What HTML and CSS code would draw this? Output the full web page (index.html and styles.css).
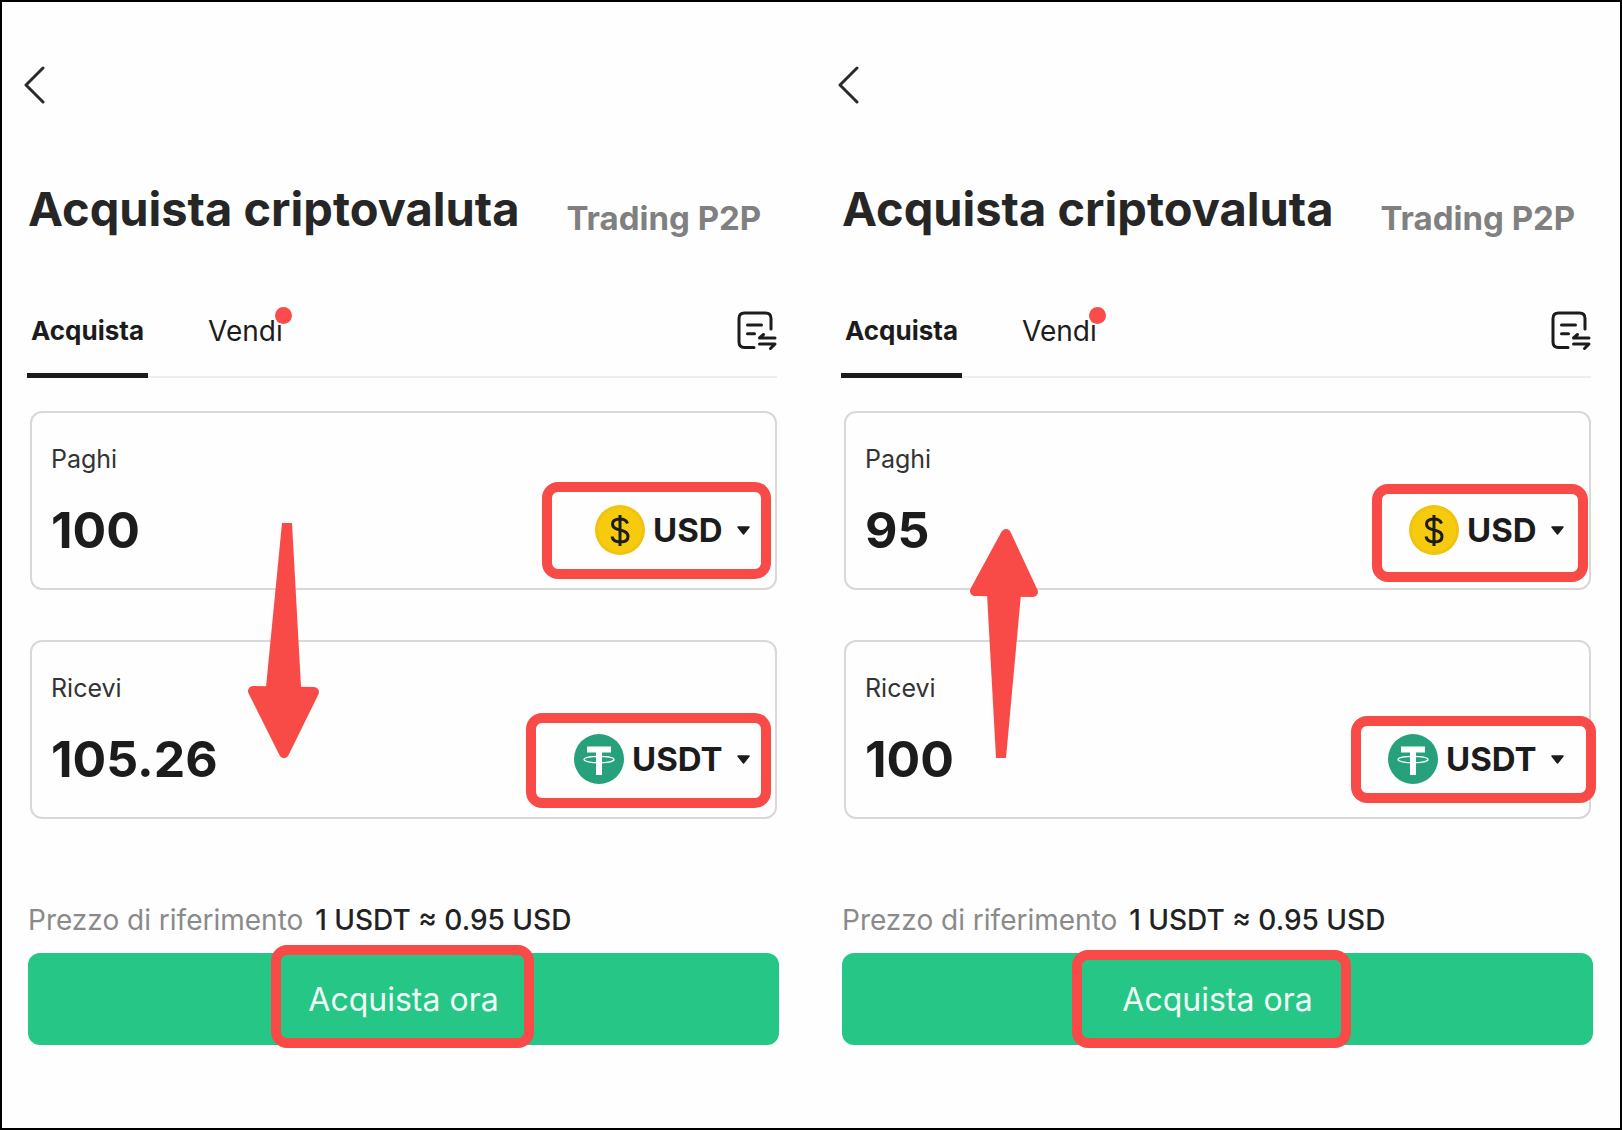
FILE: index.html
```html
<!DOCTYPE html>
<html lang="it">

<head>
  <meta charset="UTF-8">
  <meta name="viewport" content="width=device-width, initial-scale=1.0">
  <title>Acquista criptovaluta</title>
  <link rel="stylesheet" href="styles.css">
</head>

<body>
  <!-- shared icons -->
  <svg class="sprite" aria-hidden="true">
    <symbol id="back" viewBox="0 0 22 38">
      <path d="M20 2L3 19L20 36" fill="none" stroke="#2a2a2a" stroke-width="3" stroke-linecap="round" stroke-linejoin="round" />
    </symbol>
    <symbol id="orders" viewBox="0 0 40 40">
      <g fill="none" stroke="#1c1c1c" stroke-width="3" stroke-linecap="round" stroke-linejoin="round">
        <path d="M34 18V7.500Q34 2 28.500 2H7.500Q2 2 2 7.500V31Q2 36.500 7.500 36.500H17" />
        <path d="M10.500 14H24.500M10.500 22.800H17.500" />
        <path d="M38 27H22.500L26.500 23.500M22.500 33H38L33.500 37.500" />
      </g>
    </symbol>
    <symbol id="usd" viewBox="0 0 50 50">
      <circle cx="25" cy="25" r="25" fill="#f0c310" />
      <circle cx="25" cy="25" r="22" fill="#f6cb0e" />
      <path d="M32.500 18.500Q31 14 25 14Q17.500 14 17.500 19Q17.500 23.500 25 25Q33 26.500 33 31.500Q33 37 25.500 37Q18 37 17 31.500M25 10V41" fill="none" stroke="#1c1c1c" stroke-width="3" />
    </symbol>
    <symbol id="usdt" viewBox="0 0 50 50">
      <circle cx="25" cy="25" r="25" fill="#26a17b" />
      <path d="M13 12.500H37V18.500H28V41H22V18.500H13Z" fill="#fff" />
      <ellipse cx="25" cy="25.500" rx="15" ry="3.200" fill="none" stroke="#fff" stroke-width="1.300" />
    </symbol>
    <symbol id="caret" viewBox="0 0 13 9">
      <path d="M1 1H12L6.500 8Z" fill="#1c1c1c" stroke="#1c1c1c" stroke-width="1.500" stroke-linejoin="round" />
    </symbol>
  </svg>

  <main class="frame">

    <section class="screen">
      <button class="back" type="button" aria-label="Indietro"><svg><use href="#back" /></svg></button>
      <header class="head">
        <h1>Acquista criptovaluta</h1>
        <a href="#">Trading P2P</a>
      </header>
      <nav class="tabs">
        <button class="tab active" type="button">Acquista</button>
        <button class="tab" type="button"><span class="dot">Vendi</span></button>
        <button class="orders" type="button" aria-label="Ordini"><svg><use href="#orders" /></svg></button>
      </nav>
      <div class="cards">
        <div class="card">
          <label for="pay1">Paghi</label>
          <div class="row">
            <input id="pay1" type="text" value="100">
            <div class="currency">
              <svg class="coin"><use href="#usd" /></svg>
              <select aria-label="Valuta"><option>USD</option></select>
              <svg class="caret"><use href="#caret" /></svg>
              <span class="mark mark-pay1"></span>
            </div>
          </div>
        </div>
        <div class="card">
          <label for="get1">Ricevi</label>
          <div class="row">
            <input id="get1" type="text" value="105.26">
            <div class="currency">
              <svg class="coin"><use href="#usdt" /></svg>
              <select aria-label="Criptovaluta"><option>USDT</option></select>
              <svg class="caret"><use href="#caret" /></svg>
              <span class="mark mark-get1"></span>
            </div>
          </div>
        </div>
        <svg class="arrow down" viewBox="0 0 72 236">
          <path d="M34 0H44L53 164H18Z" />
          <path class="tip" d="M5 168L66 169L36 230Z" />
        </svg>
      </div>
      <p class="price">Prezzo di riferimento <b>1 USDT ≈ 0.95 USD</b></p>
      <div class="buy">
        <button type="button">Acquista ora</button>
        <span class="mark mark-buy1"></span>
      </div>
    </section>

    <section class="screen">
      <button class="back" type="button" aria-label="Indietro"><svg><use href="#back" /></svg></button>
      <header class="head">
        <h1>Acquista criptovaluta</h1>
        <a href="#">Trading P2P</a>
      </header>
      <nav class="tabs">
        <button class="tab active" type="button">Acquista</button>
        <button class="tab" type="button"><span class="dot">Vendi</span></button>
        <button class="orders" type="button" aria-label="Ordini"><svg><use href="#orders" /></svg></button>
      </nav>
      <div class="cards">
        <div class="card">
          <label for="pay2">Paghi</label>
          <div class="row">
            <input id="pay2" type="text" value="95">
            <div class="currency">
              <svg class="coin"><use href="#usd" /></svg>
              <select aria-label="Valuta"><option>USD</option></select>
              <svg class="caret"><use href="#caret" /></svg>
              <span class="mark mark-pay2"></span>
            </div>
          </div>
        </div>
        <div class="card">
          <label for="get2">Ricevi</label>
          <div class="row">
            <input id="get2" type="text" value="100">
            <div class="currency">
              <svg class="coin"><use href="#usdt" /></svg>
              <select aria-label="Criptovaluta"><option>USDT</option></select>
              <svg class="caret"><use href="#caret" /></svg>
              <span class="mark mark-get2"></span>
            </div>
          </div>
        </div>
        <svg class="arrow up" viewBox="0 0 70 230">
          <path d="M18 66H52L37 230H27Z" />
          <path class="tip" d="M6 63L64 64L37 6Z" />
        </svg>
      </div>
      <p class="price">Prezzo di riferimento <b>1 USDT ≈ 0.95 USD</b></p>
      <div class="buy">
        <button type="button">Acquista ora</button>
        <span class="mark mark-buy2"></span>
      </div>
    </section>

  </main>
</body>

</html>
```

FILE: styles.css
```css
* {
  box-sizing: border-box;
}

body {
  margin: 0;
  font-family: Inter, "Liberation Sans", sans-serif;
  color: #1c1c1c;
  background: #fefefe;
}

button,
input,
select {
  margin: 0;
  padding: 0;
  border: none;
  background: none;
  font-family: inherit;
  color: inherit;
}

svg {
  display: block;
}

.sprite {
  position: absolute;
  width: 0;
  height: 0;
}

.frame {
  display: grid;
  grid-template-columns: 1fr 1fr;
  gap: 10px;
  min-height: 100vh;
  border: 2px solid #000;
}

.screen {
  padding: 64px 27px 40px 26px;
  min-width: 0;
}

.back {
  display: block;
  margin-left: -5px;
}

.back svg {
  width: 22px;
  height: 38px;
}

.head {
  display: flex;
  align-items: flex-end;
  gap: 47px;
  margin-top: 76px;
  white-space: nowrap;
}

h1 {
  margin: 0;
  font-size: 47px;
  line-height: 58px;
  font-weight: 700;
  color: #262626;
}

.head a {
  font-size: 33px;
  line-height: 40px;
  font-weight: 700;
  color: #808080;
  text-decoration: none;
}

.tabs {
  display: flex;
  align-items: flex-start;
  margin: 73px 2px 0 -1px;
  box-shadow: inset 0 -2px #eee;
}

.tab {
  padding: 0 4px 22px;
  border-bottom: 5px solid transparent;
  font-size: 28px;
  line-height: 40px;
}

.tab + .tab {
  margin-left: 56px;
}

.active {
  border-color: #1c1c1c;
  font-size: 26px;
  font-weight: 700;
}

.dot {
  position: relative;
}

.dot::after {
  content: "";
  position: absolute;
  top: -7px;
  right: -9px;
  width: 17px;
  height: 17px;
  border-radius: 50%;
  background: #fb4b4b;
}

.orders {
  margin-left: auto;
}

.orders svg {
  width: 40px;
  height: 40px;
}

.cards {
  position: relative;
  display: grid;
  gap: 50px;
  margin: 33px 2px 0 2px;
}

.card {
  padding: 31px 25px 29px 19px;
  border: 2px solid #d8d8d8;
  border-radius: 12px;
}

.card label {
  display: block;
  font-size: 25px;
  line-height: 30px;
  color: #333;
}

.row {
  display: flex;
  justify-content: space-between;
  align-items: center;
  margin-top: 27px;
}

.row input {
  width: 50%;
  height: 58px;
  font-size: 50px;
  font-weight: 700;
}

.currency {
  position: relative;
  display: flex;
  align-items: center;
}

.coin {
  width: 50px;
  height: 50px;
}

.currency select {
  appearance: none;
  margin: 0 14px 0 8px;
  font-size: 33px;
  line-height: 40px;
  font-weight: 700;
}

.caret {
  width: 13px;
  height: 9px;
}

.price {
  margin: 84px 0 16px;
  font-size: 28px;
  line-height: 34px;
  color: #8a8a8a;
}

.price b {
  margin-left: 4px;
  font-weight: 500;
  color: #222;
}

.buy {
  position: relative;
}

.buy button {
  width: 100%;
  height: 92px;
  border-radius: 12px;
  background: #25c686;
  font-size: 32px;
  color: #f0fbf6;
}

/* red marks drawn over the screens */
.mark {
  position: absolute;
  border: 10px solid #f84b48;
  border-radius: 16px;
  pointer-events: none;
}

.mark-pay1 {
  top: -23px;
  right: -21px;
  width: 229px;
  height: 97px;
}

.mark-get1 {
  top: -21px;
  right: -21px;
  width: 245px;
  height: 95px;
}

.mark-pay2 {
  top: -21px;
  right: -24px;
  width: 216px;
  height: 98px;
}

.mark-get2 {
  top: -18px;
  right: -32px;
  width: 245px;
  height: 87px;
}

.mark-buy1 {
  top: -8px;
  left: calc(50% - 133px);
  width: 263px;
  height: 103px;
}

.mark-buy2 {
  top: -3px;
  left: calc(50% - 146px);
  width: 279px;
  height: 98px;
}

.arrow {
  position: absolute;
  fill: #f84b48;
  pointer-events: none;
}

.tip {
  stroke: #f84b48;
  stroke-width: 10;
  stroke-linejoin: round;
}

.down {
  top: 112px;
  left: 218px;
  width: 72px;
  height: 236px;
}

.up {
  top: 117px;
  left: 125px;
  width: 70px;
  height: 230px;
}
```
